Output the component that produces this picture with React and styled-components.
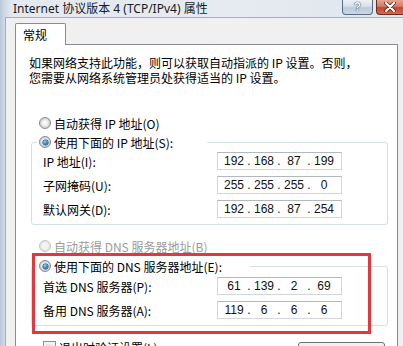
import React from "react";
import styled, { createGlobalStyle } from "styled-components";

const GlobalStyle = createGlobalStyle`
  html, body {
    margin: 0;
    padding: 0;
    overflow: hidden;
    background: #f0f0f0;
  }
  * {
    box-sizing: border-box;
  }
`;

const Window = styled.div`
  position: relative;
  width: 403px;
  height: 346px;
  overflow: hidden;
  display: flex;
  flex-direction: column;
  background: linear-gradient(to right, #b7c7d9 0, #cdd8e5 4px, #e4e9ef 12px, #e6ebf1 60%, #dfe6ee 100%);
  font-family: "Noto Sans CJK SC", "Noto Sans", sans-serif;
  font-size: 12px;
  color: #000;
`;

const TitleBar = styled.div`
  height: 17px;
  flex: none;
  display: flex;
  align-items: flex-start;
  padding-left: 13px;
`;

const Title = styled.div`
  line-height: 17px;
  color: #1b1b1b;
  font-family: "Noto Sans", "Noto Sans CJK SC", sans-serif;
  font-size: 12px;
  white-space: nowrap;
`;

const Controls = styled.div`
  margin-left: auto;
  display: flex;
  gap: 3px;
`;

const CaptionButton = styled.div`
  height: 15px;
  display: flex;
  align-items: center;
  justify-content: center;
  border: 1px solid #5d6b80;
  border-top: none;
  border-radius: 0 0 4px 4px;
`;

const HelpButton = styled(CaptionButton)`
  width: 31px;
  background: linear-gradient(#eef2f7 0%, #d6e0ea 45%, #bccbdc 55%, #c9d7e6 100%);
  color: #f7f9fb;
  font-family: "Liberation Sans", sans-serif;
  font-weight: bold;
  font-size: 12px;
  text-shadow: 0 0 1px #2c3d55, 0 0 1px #2c3d55;
`;

const CloseButton = styled(CaptionButton)`
  width: 27px;
  border-color: #6e2a20;
  border-right: none;
  border-radius: 0 0 0 4px;
  background: linear-gradient(#e8a493 0%, #d87a66 45%, #c2472f 55%, #d4674e 100%);
`;

const Client = styled.div`
  flex: 1;
  margin-left: 5px;
  border-left: 1px solid #a5afbc;
  border-top: 1px solid #a5afbc;
  background: #f0f0f0;
  padding: 5px 0 0 9px;
`;

const TabStrip = styled.div`
  display: flex;
  position: relative;
  z-index: 1;
  margin-bottom: -1px;
`;

const Tab = styled.div`
  width: 51px;
  height: 22px;
  padding-left: 7px;
  line-height: 22px;
  background: #fff;
  border: 1px solid #898c95;
  border-bottom: none;
  border-radius: 2px 2px 0 0;
`;

const Panel = styled.div`
  width: 383px;
  height: 320px;
  border: 1px solid #898c95;
  background: #fff;
  display: flex;
  flex-direction: column;
  align-items: flex-start;
`;

const Intro = styled.p`
  margin: 10px 0 0 13px;
  line-height: 15px;
  white-space: nowrap;
`;

const OptionRow = styled.div`
  height: 16px;
  margin: ${(p) => p.$top}px 0 0 23px;
  display: flex;
  align-items: center;
  gap: 3px;
  color: ${(p) => (p.$disabled ? "#9b9b9b" : "#000")};
  white-space: nowrap;
`;

const Radio = styled.span`
  position: relative;
  width: 12px;
  height: 12px;
  flex: none;
  border-radius: 50%;
  border: 1px solid ${(p) => (p.$disabled ? "#c4c4c4" : "#8a8a8a")};
  background: ${(p) =>
    p.$disabled
      ? "radial-gradient(circle at 50% 50%, #f4f4f4 0, #f4f4f4 35%, #e2e2e2 70%, #f2f2f2 100%)"
      : "radial-gradient(circle at 50% 50%, #ffffff 0, #f1f1f1 35%, #cfcfcf 70%, #eeeeee 100%)"};

  &::after {
    content: "";
    display: ${(p) => (p.$checked ? "block" : "none")};
    position: absolute;
    left: 2.5px;
    top: 2.5px;
    width: 5px;
    height: 5px;
    border-radius: 50%;
    background: radial-gradient(circle at 40% 35%, #9fd4fb 0, #3d8fd8 40%, #0d4a8d 100%);
    box-shadow: 0 0 0 0.5px #0b3c72;
  }
`;

const Group = styled.fieldset`
  margin: ${(p) => p.$top}px 0 0 15px;
  width: 357px;
  padding: 0 0 6px 0;
  border: 1px solid #d5dfe5;
  border-radius: 3px;
  min-inline-size: 0;
`;

const Legend = styled.legend`
  width: ${(p) => p.$width}px;
  height: 16px;
  margin-left: 5px;
  padding: 0 0 0 2px;
  display: flex;
  align-items: center;
  gap: 3px;
  white-space: nowrap;
`;

const FieldRows = styled.div`
  display: flex;
  flex-direction: column;
  gap: 6px;
  margin-top: ${(p) => p.$top}px;
`;

const FieldRow = styled.div`
  display: flex;
  align-items: center;
  padding-left: 11px;
`;

const FieldLabel = styled.span`
  width: 174px;
  white-space: nowrap;
`;

const IpBox = styled.div`
  width: 125px;
  height: 18px;
  display: flex;
  align-items: center;
  padding-left: 4px;
  background: #fff;
  border: 1px solid #d3d6db;
  border-top-color: #b3b7bf;
  font-family: "Liberation Sans", sans-serif;
  font-size: 12px;
  color: #111;
`;

const Octet = styled.span`
  width: 24px;
  text-align: center;
  line-height: 16px;
`;

const Dot = styled.span`
  width: 6px;
  text-align: center;
  line-height: 16px;
`;

const Footer = styled.div`
  width: 100%;
  margin-top: 14px;
  padding: 0 12px 0 27px;
  display: flex;
  align-items: flex-start;
`;

const Check = styled.span`
  width: 13px;
  height: 13px;
  margin-top: 1px;
  flex: none;
  border: 1px solid #8e8f8f;
  background: linear-gradient(135deg, #dcdcdc, #fafafa);
  box-shadow: inset 0 0 0 2px #f4f4f4;
`;

const CheckLabel = styled.span`
  margin-left: 3px;
  line-height: 16px;
  white-space: nowrap;
`;

const Button = styled.div`
  margin: 2px 0 0 auto;
  width: 87px;
  height: 23px;
  border: 1px solid #707070;
  border-radius: 3px;
  background: linear-gradient(#f2f2f2 0%, #ebebeb 50%, #dddddd 51%, #cfcfcf 100%);
  display: flex;
  align-items: center;
  justify-content: center;
`;

const Highlight = styled.div`
  position: absolute;
  left: 32px;
  top: 253px;
  width: 339px;
  height: 81px;
  border: 3px solid #e2373d;
  pointer-events: none;
`;

function IpField({ octets }) {
  return (
    <IpBox>
      {octets.map((o, i) => (
        <React.Fragment key={i}>
          {i > 0 && <Dot>.</Dot>}
          <Octet>{o}</Octet>
        </React.Fragment>
      ))}
    </IpBox>
  );
}

function AddressGroup({ top, legendWidth, legend, rowsTop, rows }) {
  return (
    <Group $top={top}>
      <Legend $width={legendWidth}>
        <Radio $checked />
        <span>{legend}</span>
      </Legend>
      <FieldRows $top={rowsTop}>
        {rows.map((r) => (
          <FieldRow key={r.label}>
            <FieldLabel>{r.label}</FieldLabel>
            <IpField octets={r.value} />
          </FieldRow>
        ))}
      </FieldRows>
    </Group>
  );
}

const ipRows = [
  { label: "IP 地址(I):", value: ["192", "168", "87", "199"] },
  { label: "子网掩码(U):", value: ["255", "255", "255", "0"] },
  { label: "默认网关(D):", value: ["192", "168", "87", "254"] },
];

const dnsRows = [
  { label: "首选 DNS 服务器(P):", value: ["61", "139", "2", "69"] },
  { label: "备用 DNS 服务器(A):", value: ["119", "6", "6", "6"] },
];

export default function App() {
  return (
    <>
      <GlobalStyle />
      <Window>
        <TitleBar>
          <Title>Internet 协议版本 4 (TCP/IPv4) 属性</Title>
          <Controls>
            <HelpButton>?</HelpButton>
            <CloseButton>
              <svg width="12" height="10" viewBox="0 0 12 10">
                <path
                  d="M2 1 L10 9 M10 1 L2 9"
                  stroke="#5a1d14"
                  strokeWidth="3.6"
                  strokeLinecap="round"
                />
                <path
                  d="M2 1 L10 9 M10 1 L2 9"
                  stroke="#ffffff"
                  strokeWidth="2.2"
                  strokeLinecap="round"
                />
              </svg>
            </CloseButton>
          </Controls>
        </TitleBar>
        <Client>
          <TabStrip>
            <Tab>常规</Tab>
          </TabStrip>
          <Panel>
            <Intro>
              如果网络支持此功能，则可以获取自动指派的 IP 设置。否则，
              <br />
              您需要从网络系统管理员处获得适当的 IP 设置。
            </Intro>
            <OptionRow $top={30}>
              <Radio />
              <span>自动获得 IP 地址(O)</span>
            </OptionRow>
            <AddressGroup
              top={3}
              legendWidth={170}
              legend="使用下面的 IP 地址(S):"
              rowsTop={2}
              rows={ipRows}
            />
            <OptionRow $top={13} $disabled>
              <Radio $disabled />
              <span>自动获得 DNS 服务器地址(B)</span>
            </OptionRow>
            <AddressGroup
              top={4}
              legendWidth={213}
              legend="使用下面的 DNS 服务器地址(E):"
              rowsTop={3}
              rows={dnsRows}
            />
            <Footer>
              <Check />
              <CheckLabel>退出时验证设置(L)</CheckLabel>
              <Button>高级(V)...</Button>
            </Footer>
          </Panel>
        </Client>
        <Highlight />
      </Window>
    </>
  );
}
